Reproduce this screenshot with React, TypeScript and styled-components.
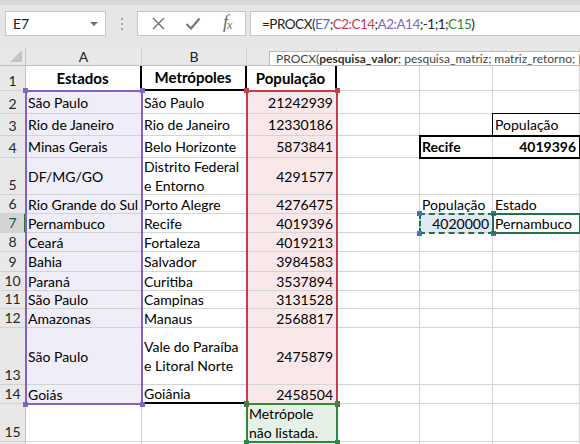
import React from 'react';
import styled, { createGlobalStyle } from 'styled-components';

const GlobalStyle = createGlobalStyle`
  html, body { margin: 0; padding: 0; background: #fff; }
  body { font-family: Lato, "Noto Sans", sans-serif; }
  * { box-sizing: border-box; }
`;

const COLS = [26, 116, 105, 90, 83, 73, 87];
const ROWS = [18, 25, 23, 22, 22, 37, 19, 19, 19, 20, 19, 18, 19, 57, 19, 38, 19];

const GRID = '1px solid #d4d4d4';
const PURPLE = '#8562c6';
const RED = '#c63d4a';
const GREEN = '#2b8a3e';
const XLGREEN = '#217346';
const BLUE = '#3f6fd1';

const Page = styled.div`
  width: 580px;
  height: 444px;
  overflow: hidden;
  background: #fff;
  display: flex;
  flex-direction: column;
`;

const Toolbar = styled.div`
  flex: none;
  height: 48px;
  background: #e6e6e6;
  border-top: 5px solid #d8d8d8;
  padding: 6px 0 0 5px;
  display: flex;
  align-items: flex-start;
`;

const NameBox = styled.div`
  width: 101px;
  height: 25px;
  background: #fff;
  border: 1px solid #c6c6c6;
  display: flex;
  align-items: center;
  justify-content: space-between;
  padding: 0 7px 0 7px;
  font-size: 14px;
  color: #222;
`;

const DropArrow = styled.span`
  width: 0;
  height: 0;
  border-left: 4px solid transparent;
  border-right: 4px solid transparent;
  border-top: 4px solid #6f6f6f;
`;

const Separator = styled.div`
  width: 31px;
  height: 25px;
  display: flex;
  flex-direction: column;
  align-items: center;
  justify-content: center;
  gap: 3px;
`;

const Dot = styled.span`
  width: 2px;
  height: 2px;
  background: #a4a4a4;
`;

const ButtonGroup = styled.div`
  width: 109px;
  height: 25px;
  background: #fff;
  border: 1px solid #c6c6c6;
  display: flex;
  align-items: center;
  padding-left: 3px;
`;

const ToolButton = styled.div`
  width: 36px;
  height: 23px;
  display: flex;
  align-items: center;
  justify-content: center;
  color: #727272;
`;

const Fx = styled.span`
  font-family: "Liberation Serif", "DejaVu Serif", serif;
  font-style: italic;
  font-size: 18px;
  line-height: 18px;
  color: #6a6a6a;
  sub {
    font-size: 12px;
    vertical-align: -1px;
    margin-left: -1px;
  }
`;

const FormulaInput = styled.div`
  flex: 1;
  height: 25px;
  margin-left: 4px;
  margin-right: -2px;
  background: #fff;
  border: 1px solid #c6c6c6;
  display: flex;
  align-items: center;
  padding-left: 11px;
  color: #222;
  white-space: pre;
`;

const FormulaText = styled.span`
  font-family: Lato, "Noto Sans", sans-serif;
  font-size: 13.5px;
  letter-spacing: -0.5px;
`;

const Ref = styled.span<{ $c: string }>`
  color: ${(p) => p.$c};
`;

const Sheet = styled.div`
  position: relative;
  flex: none;
  display: grid;
  grid-template-columns: ${COLS.map((c) => c + 'px').join(' ')};
  grid-template-rows: ${ROWS.map((r) => r + 'px').join(' ')};
`;

const Corner = styled.div`
  grid-row: 1;
  grid-column: 1;
  background: #e8e8e8;
  border-right: 1px solid #c4c4c4;
  border-bottom: 1px solid #bdbdbd;
  position: relative;
  &::after {
    content: '';
    position: absolute;
    right: 3px;
    bottom: 3px;
    width: 0;
    height: 0;
    border-left: 12px solid transparent;
    border-bottom: 12px solid #c4c4c4;
  }
`;

const ColHead = styled.div<{ $c: number }>`
  grid-row: 1;
  grid-column: ${(p) => p.$c};
  background: #e8e8e8;
  border-right: 1px solid #d2d2d2;
  border-bottom: 1px solid #bdbdbd;
  display: flex;
  align-items: center;
  justify-content: center;
  font-size: 14px;
  color: #222;
`;

const RowHead = styled.div<{ $r: number; $active?: boolean }>`
  grid-row: ${(p) => p.$r};
  grid-column: 1;
  background: ${(p) => (p.$active ? '#d4d4d4' : '#e8e8e8')};
  border-right: ${(p) => (p.$active ? `2px solid ${XLGREEN}` : '1px solid #c4c4c4')};
  border-bottom: 1px solid #d2d2d2;
  display: flex;
  align-items: flex-end;
  justify-content: center;
  padding-left: ${(p) => (p.$active ? '1px' : '0')};
  font-size: 14px;
  line-height: 18px;
  color: ${(p) => (p.$active ? '#1f5a36' : '#262626')};
`;

type Align = 'l' | 'r' | 'c';

const Cell = styled.div<{
  $r: number;
  $c: number;
  $align?: Align;
  $bold?: boolean;
  $bg?: string;
  $right?: string;
  $bottom?: string;
  $size?: number;
}>`
  grid-row: ${(p) => p.$r};
  grid-column: ${(p) => p.$c};
  display: flex;
  align-items: center;
  justify-content: ${(p) => (p.$align === 'r' ? 'flex-end' : p.$align === 'c' ? 'center' : 'flex-start')};
  padding: 0 3px 0 2px;
  background: ${(p) => p.$bg ?? '#fff'};
  border-right: ${(p) => p.$right ?? GRID};
  border-bottom: ${(p) => p.$bottom ?? GRID};
  font-size: ${(p) => p.$size ?? 14}px;
  font-weight: ${(p) => (p.$bold ? 700 : 400)};
  line-height: 19px;
  color: #000;
  white-space: pre;
  overflow: hidden;
`;

const RangeBox = styled.div<{
  $area: string;
  $color: string;
  $width?: number;
  $dashed?: boolean;
  $noBottom?: boolean;
  $z?: number;
}>`
  grid-area: ${(p) => p.$area};
  position: relative;
  z-index: ${(p) => p.$z ?? 2};
  pointer-events: none;
  margin: -1px;
  border: ${(p) => p.$width ?? 2}px ${(p) => (p.$dashed ? 'dashed' : 'solid')} ${(p) => p.$color};
  ${(p) => (p.$noBottom ? 'border-bottom: none;' : '')}
`;

const Handle = styled.span<{ $pos: 'tl' | 'tr' | 'bl' | 'br'; $color: string }>`
  position: absolute;
  width: 5px;
  height: 5px;
  background: ${(p) => p.$color};
  ${(p) => (p.$pos[0] === 't' ? 'top: -4px;' : 'bottom: -4px;')}
  ${(p) => (p.$pos[1] === 'l' ? 'left: -4px;' : 'right: -4px;')}
`;

const Tooltip = styled.div`
  position: absolute;
  z-index: 5;
  top: 3px;
  left: 269px;
  height: 15px;
  padding: 0 6px;
  background: #fff;
  border: 1px solid #bdbdbd;
  font-size: 12px;
  line-height: 13px;
  color: #444;
  white-space: nowrap;
  b {
    font-weight: 700;
    color: #333;
  }
`;

type CellDef = {
  t?: string;
  align?: Align;
  bold?: boolean;
  bg?: string;
  right?: string;
  bottom?: string;
  size?: number;
};

const A_BG = '#efedf8';
const C_BG = '#f9e8e9';
const C15_BG = '#e5f1e5';
const E7_BG = '#e1e9f6';

const metro: [string, string, string][] = [
  ['São Paulo', 'São Paulo', '21242939'],
  ['Rio de Janeiro', 'Rio de Janeiro', '12330186'],
  ['Minas Gerais', 'Belo Horizonte', '5873841'],
  ['DF/MG/GO', 'Distrito Federal\ne Entorno', '4291577'],
  ['Rio Grande do Sul', 'Porto Alegre', '4276475'],
  ['Pernambuco', 'Recife', '4019396'],
  ['Ceará', 'Fortaleza', '4019213'],
  ['Bahia', 'Salvador', '3984583'],
  ['Paraná', 'Curitiba', '3537894'],
  ['São Paulo', 'Campinas', '3131528'],
  ['Amazonas', 'Manaus', '2568817'],
  ['São Paulo', 'Vale do Paraíba\ne Litoral Norte', '2475879'],
  ['Goiás', 'Goiânia', '2458504'],
];

function buildRows(): CellDef[][] {
  const rows: CellDef[][] = [];
  rows.push([
    { t: 'Estados', align: 'c', bold: true, size: 15, right: '2px solid #000' },
    { t: 'Metrópoles', align: 'c', bold: true, size: 15, right: '2px solid #000', bottom: '2px solid #000' },
    { t: 'População', align: 'c', bold: true, size: 15, right: '2px solid #000' },
    {},
    {},
    {},
  ]);
  metro.forEach(([a, b, c], i) => {
    const rowNo = i + 2;
    rows.push([
      { t: a, bg: A_BG },
      { t: b, bottom: rowNo === 14 ? '2px solid #000' : undefined },
      { t: c, align: 'r', bg: C_BG },
      {},
      {},
      {},
    ]);
  });
  rows[2][5] = { t: 'População' };
  rows[3][4] = { t: 'Recife', bold: true };
  rows[3][5] = { t: '4019396', bold: true, align: 'r' };
  rows[5][4] = { t: 'População' };
  rows[5][5] = { t: 'Estado' };
  rows[6][4] = { t: '4020000', align: 'r', bg: E7_BG };
  rows[6][5] = { t: 'Pernambuco' };
  rows.push([{}, {}, { t: 'Metrópole\nnão listada.', bg: C15_BG }, {}, {}, {}]);
  rows.push([{}, {}, {}, {}, {}, {}]);
  return rows;
}

const ROW_DATA = buildRows();

const handles = (color: string) => (
  <>
    <Handle $pos="tl" $color={color} />
    <Handle $pos="tr" $color={color} />
    <Handle $pos="bl" $color={color} />
    <Handle $pos="br" $color={color} />
  </>
);

const area = (r1: number, c1: number, r2: number, c2: number) =>
  `${r1 + 1} / ${c1 + 2} / ${r2 + 2} / ${c2 + 3}`;

// Column letters C to F sit under the function tooltip and are not visible.
const COL_LABELS = ['A', 'B', '', '', '', ''];

export default function App() {
  return (
    <Page>
      <GlobalStyle />
      <Toolbar>
        <NameBox>
          <span>E7</span>
          <DropArrow />
        </NameBox>
        <Separator>
          <Dot />
          <Dot />
          <Dot />
        </Separator>
        <ButtonGroup>
          <ToolButton>
            <svg width="13" height="13" viewBox="0 0 13 13">
              <path d="M1 1 L12 12 M12 1 L1 12" stroke="#777" strokeWidth="1.5" fill="none" />
            </svg>
          </ToolButton>
          <ToolButton>
            <svg width="16" height="13" viewBox="0 0 16 13">
              <path d="M1.5 7 L6 11.5 L14.5 1.5" stroke="#777" strokeWidth="2.2" fill="none" />
            </svg>
          </ToolButton>
          <ToolButton>
            <Fx>
              f<sub>x</sub>
            </Fx>
          </ToolButton>
        </ButtonGroup>
        <FormulaInput>
          <FormulaText>
            {'=PROCX('}
            <Ref $c={BLUE}>E7</Ref>
            {';'}
            <Ref $c={RED}>C2:C14</Ref>
            {';'}
            <Ref $c={PURPLE}>A2:A14</Ref>
            {';-1;1;'}
            <Ref $c={GREEN}>C15</Ref>
            {')'}
          </FormulaText>
        </FormulaInput>
      </Toolbar>
      <Sheet>
        <Corner />
        {COL_LABELS.map((l, i) => (
          <ColHead key={i} $c={i + 2}>
            {l}
          </ColHead>
        ))}
        {ROW_DATA.map((row, ri) => {
          const rowNo = ri + 1;
          return (
            <React.Fragment key={rowNo}>
              <RowHead $r={rowNo + 1} $active={rowNo === 7}>
                {rowNo <= 15 ? rowNo : ''}
              </RowHead>
              {row.map((c, ci) => (
                <Cell
                  key={ci}
                  $r={rowNo + 1}
                  $c={ci + 2}
                  $align={c.align}
                  $bold={c.bold}
                  $bg={c.bg}
                  $right={c.right}
                  $bottom={c.bottom}
                  $size={c.size}
                >
                  {c.t}
                </Cell>
              ))}
            </React.Fragment>
          );
        })}
        <RangeBox $area={area(3, 5, 3, 5)} $color="#000" $width={1} $noBottom $z={1} />
        <RangeBox $area={area(4, 4, 4, 5)} $color="#000" $z={1} />
        <RangeBox $area={area(2, 0, 14, 0)} $color={PURPLE}>
          {handles(PURPLE)}
        </RangeBox>
        <RangeBox $area={area(2, 2, 14, 2)} $color={RED}>
          {handles(RED)}
        </RangeBox>
        <RangeBox $area={area(15, 2, 15, 2)} $color={GREEN} $z={3}>
          {handles(GREEN)}
        </RangeBox>
        <RangeBox $area={area(7, 4, 7, 4)} $color={XLGREEN} $dashed $z={3}>
          {handles(BLUE)}
        </RangeBox>
        <RangeBox $area={area(7, 5, 7, 5)} $color={XLGREEN} $z={3} />
        <Tooltip>
          PROCX(<b>pesquisa_valor</b>; pesquisa_matriz; matriz_retorno; [
        </Tooltip>
      </Sheet>
    </Page>
  );
}
